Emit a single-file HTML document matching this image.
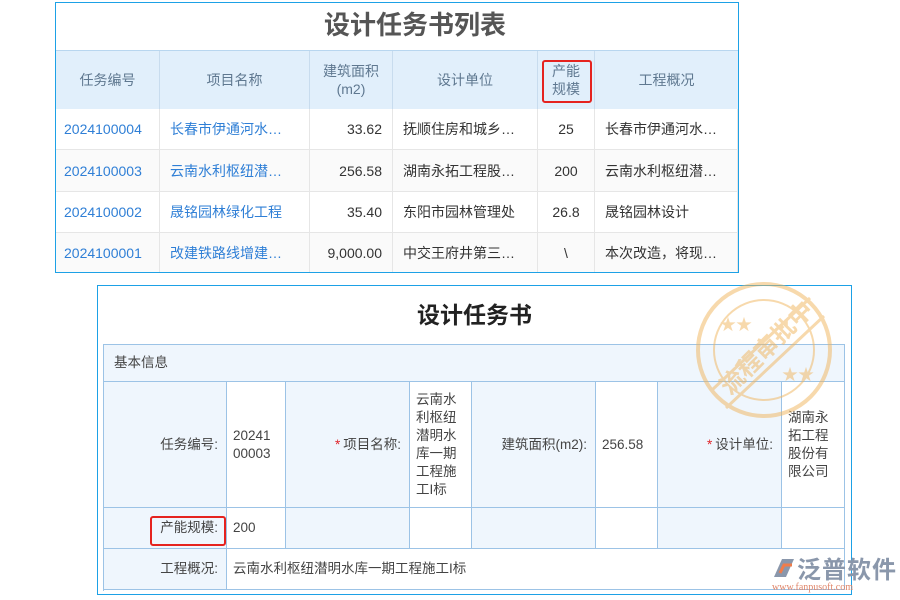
<!DOCTYPE html><html><head><meta charset="utf-8"><style>
*{margin:0;padding:0;box-sizing:border-box}
body{width:900px;height:600px;background:#fff;position:relative;overflow:hidden;font-family:"Liberation Sans","Noto Sans CJK SC",sans-serif;color:#333}
.a{position:absolute}
.c{position:absolute;display:flex;align-items:center;font-size:14px}
.hd{background:#e1effb;color:#5f7890;justify-content:center;text-align:center;border-right:1px solid #c8dcee;line-height:18px}
.td{border-right:1px solid #e6e6e6;border-bottom:1px solid #e6e6e6;padding:0 10px;white-space:nowrap}
.bl{color:#2f7fd6}
.f{position:absolute;display:flex;align-items:center;font-size:13.5px;color:#444;border-right:1px solid #9cc3e6;border-bottom:1px solid #9cc3e6;line-height:18px}
.lb{background:#eff6fd;justify-content:flex-end;padding-right:8px}
.vl{background:#fff;padding-left:6px}
.r{color:#e0262b;margin-right:3px}
</style></head><body>
<div class="a" style="left:55px;top:2px;width:684px;height:271px;border:1px solid #1da1e6"></div>
<div class="a" style="left:56px;top:5px;width:682px;text-align:center;font-size:26px;font-weight:bold;color:#555;padding-left:36px">设计任务书列表</div>
<div class="a" style="left:56px;top:50px;width:682px;height:1px;background:#b8d6ef"></div>
<div class="c hd" style="left:56px;top:51px;width:104px;height:58px">任务编号</div>
<div class="c hd" style="left:160px;top:51px;width:150px;height:58px">项目名称</div>
<div class="c hd" style="left:310px;top:51px;width:83px;height:58px">建筑面积<br>(m2)</div>
<div class="c hd" style="left:393px;top:51px;width:145px;height:58px">设计单位</div>
<div class="c hd" style="left:538px;top:51px;width:57px;height:58px">产能<br>规模</div>
<div class="c hd" style="left:595px;top:51px;width:143px;height:58px;border-right:0">工程概况</div>
<div class="a" style="left:542px;top:60px;width:50px;height:43px;border:2px solid #e5231f;border-radius:3px"></div>
<div id="rows"></div>
<div class="a" style="left:97px;top:285px;width:755px;height:310px;border:1px solid #1da1e6"></div>
<div class="a" style="left:98px;top:296px;width:753px;text-align:center;font-size:23px;font-weight:bold;color:#222">设计任务书</div>
<div class="a" style="left:103px;top:344px;width:742px;height:247px;border-left:1px solid #9cc3e6;border-top:1px solid #9cc3e6"></div>
<div class="f" style="left:104px;top:345px;width:741px;height:37px;background:#eff6fd;padding-left:10px">基本信息</div>
<div class="f lb" style="left:104px;top:382px;width:123px;height:126px">任务编号:</div>
<div class="f vl" style="left:227px;top:382px;width:59px;height:126px">20241<br>00003</div>
<div class="f lb" style="left:286px;top:382px;width:124px;height:126px"><span class="r">*</span>项目名称:</div>
<div class="f vl" style="left:410px;top:382px;width:62px;height:126px">云南水<br>利枢纽<br>潜明水<br>库一期<br>工程施<br>工I标</div>
<div class="f lb" style="left:472px;top:382px;width:124px;height:126px">建筑面积(m2):</div>
<div class="f vl" style="left:596px;top:382px;width:62px;height:126px">256.58</div>
<div class="f lb" style="left:658px;top:382px;width:124px;height:126px"><span class="r">*</span>设计单位:</div>
<div class="f vl" style="left:782px;top:382px;width:63px;height:126px">湖南永<br>拓工程<br>股份有<br>限公司</div>
<div class="f lb" style="left:104px;top:508px;width:123px;height:41px">产能规模:</div>
<div class="f vl" style="left:227px;top:508px;width:59px;height:41px">200</div>
<div class="f lb" style="left:286px;top:508px;width:124px;height:41px"></div>
<div class="f vl" style="left:410px;top:508px;width:62px;height:41px"></div>
<div class="f lb" style="left:472px;top:508px;width:124px;height:41px"></div>
<div class="f vl" style="left:596px;top:508px;width:62px;height:41px"></div>
<div class="f lb" style="left:658px;top:508px;width:124px;height:41px"></div>
<div class="f vl" style="left:782px;top:508px;width:63px;height:41px"></div>
<div class="f lb" style="left:104px;top:549px;width:123px;height:41px">工程概况:</div>
<div class="f vl" style="left:227px;top:549px;width:618px;height:41px">云南水利枢纽潜明水库一期工程施工I标</div>
<div class="a" style="left:150px;top:516px;width:76px;height:30px;border:2px solid #e5231f;border-radius:3px"></div>
<svg class="a" style="left:690px;top:280px" width="150" height="150" viewBox="0 0 150 150" opacity="0.5">
<g fill="none" stroke="#f0b45c"><circle cx="74" cy="70" r="66" stroke-width="4"/><circle cx="74" cy="70" r="50" stroke-width="2"/>
<line x1="22" y1="110" x2="120" y2="18" stroke-width="3"/><line x1="36" y1="128" x2="134" y2="36" stroke-width="3"/></g>
<text x="0" y="0" transform="translate(40,116) rotate(-45)" font-size="24" font-weight="bold" fill="#f0b45c" font-family="Noto Sans CJK SC">流程审批中</text>
<text x="30" y="50" font-size="16" fill="#f0b45c">★★</text><text x="92" y="100" font-size="16" fill="#f0b45c">★★</text></svg>
<svg class="a" style="left:770px;top:555px" width="26" height="26"><path d="M4 22 L12 4 L24 4 L16 22Z" fill="#8a97ab"/><path d="M10 18 L14 10 L22 10" fill="none" stroke="#f07c4a" stroke-width="3"/></svg>
<div class="a" style="left:797px;top:550px;font-size:24px;color:#8a97ab;font-weight:bold;letter-spacing:1px">泛普软件</div>
<div class="a" style="left:772px;top:582px;font-size:10px;color:#e0866a;font-family:'Liberation Serif',serif">www.fanpusoft.com</div>
<script>
var d=[["2024100004","长春市伊通河水…","33.62","抚顺住房和城乡…","25","长春市伊通河水…"],["2024100003","云南水利枢纽潜…","256.58","湖南永拓工程股…","200","云南水利枢纽潜…"],["2024100002","晟铭园林绿化工程","35.40","东阳市园林管理处","26.8","晟铭园林设计"],["2024100001","改建铁路线增建…","9,000.00","中交王府井第三…","\\","本次改造，将现…"]];
var x=[56,160,310,393,538,595,738],y=[109,150,192,233,272],h="";
d.forEach(function(r,i){r.forEach(function(t,j){var st="left:"+x[j]+"px;top:"+y[i]+"px;width:"+(x[j+1]-x[j])+"px;height:"+(y[i+1]-y[i])+"px;";
if(j==2)st+="justify-content:flex-end;";if(j==4)st+="justify-content:center;";if(j==0)st+="padding-left:8px;";if(j==6)st+="border-right:0;";if(i==3)st+="border-bottom:0;";if(i%2)st+="background:#fafafa;";
h+='<div class="c td'+(j<2?' bl':'')+'" style="'+st+'">'+t+'</div>';});});
document.getElementById("rows").innerHTML=h;
</script>
</body></html>
